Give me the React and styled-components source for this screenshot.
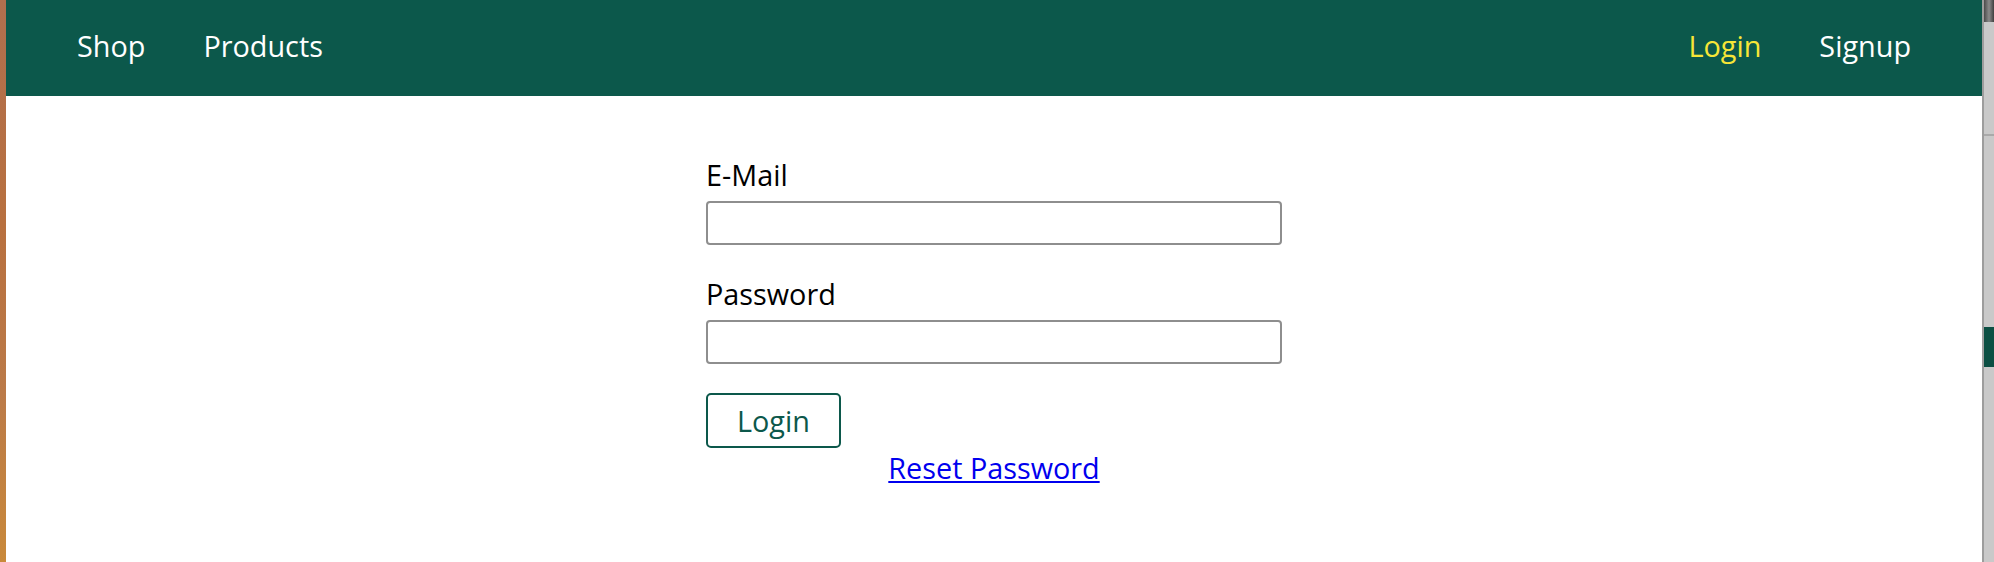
import React from "react";
import styled, { createGlobalStyle } from "styled-components";

const GlobalStyle = createGlobalStyle`
  html, body {
    margin: 0;
    padding: 0;
    height: 100%;
    background: #ffffff;
  }
  body {
    font-family: "Open Sans", "Noto Sans", sans-serif;
  }
  * {
    box-sizing: border-box;
  }
`;

const navLinks = [
  { label: "Shop", href: "/" },
  { label: "Products", href: "/products" }
];

const authLinks = [
  { label: "Login", href: "/login", active: true },
  { label: "Signup", href: "/signup" }
];

const App = () => {
  return (
    <React.Fragment>
      <GlobalStyle />
      <Screen>
        <LeftEdge />
        <Page>
          <Header>
            <NavList>
              {navLinks.map(item => (
                <NavItem key={item.label}>
                  <NavLink href={item.href}>{item.label}</NavLink>
                </NavItem>
              ))}
            </NavList>
            <NavList>
              {authLinks.map(item => (
                <NavItem key={item.label}>
                  <NavLink href={item.href} $active={item.active}>
                    {item.label}
                  </NavLink>
                </NavItem>
              ))}
            </NavList>
          </Header>
          <Main>
            <LoginForm onSubmit={e => e.preventDefault()}>
              <FormControl>
                <Label htmlFor="email">E-Mail</Label>
                <Input type="email" id="email" name="email" />
              </FormControl>
              <FormControl>
                <Label htmlFor="password">Password</Label>
                <Input type="password" id="password" name="password" />
              </FormControl>
              <Button type="submit">Login</Button>
            </LoginForm>
            <Centered>
              <ResetLink href="/reset">Reset Password</ResetLink>
            </Centered>
          </Main>
        </Page>
        <RightEdge>
          <EdgeTop />
          <EdgeLine />
          <EdgeBand />
        </RightEdge>
      </Screen>
    </React.Fragment>
  );
};

export default App;

const Screen = styled.div`
  display: flex;
  height: 100vh;
  overflow: hidden;
`;

const LeftEdge = styled.div`
  width: 6px;
  flex: 0 0 6px;
  background: linear-gradient(180deg, #b06f4e 0%, #b8703f 40%, #bb7a48 70%, #c9893a 100%);
`;

const RightEdge = styled.div`
  position: relative;
  width: 12px;
  flex: 0 0 12px;
  background: #c9c9c9;
  border-left: 2px solid #9d9d9d;
`;

const EdgeTop = styled.div`
  height: 22px;
  background: linear-gradient(90deg, #4a4a4a, #8a8a8a 50%, #3f3f3f);
`;

const EdgeLine = styled.div`
  position: absolute;
  left: 0;
  right: 0;
  top: 134px;
  height: 2px;
  background: #a9a9a9;
`;

const EdgeBand = styled.div`
  position: absolute;
  left: 0;
  right: 0;
  top: 327px;
  height: 40px;
  background: #0b4f43;
`;

const Page = styled.div`
  flex: 1;
  display: flex;
  flex-direction: column;
  background: #ffffff;
`;

const Header = styled.header`
  height: 96px;
  background: #0c584b;
  padding: 0 71px 5px 71px;
  display: flex;
  align-items: center;
  justify-content: space-between;
`;

const NavList = styled.ul`
  list-style: none;
  margin: 0;
  padding: 0;
  display: flex;
  align-items: center;
  gap: 58px;
`;

const NavItem = styled.li`
  margin: 0;
`;

const NavLink = styled.a`
  font-size: 28.8px;
  color: ${props => (props.$active ? "#f7e637" : "#ffffff")};
  text-decoration: none;
`;

const Main = styled.main`
  padding-top: 59px;
`;

const LoginForm = styled.form`
  width: 576px;
  margin: 0 auto;
`;

const FormControl = styled.div`
  margin-bottom: 29px;
`;

const Label = styled.label`
  display: block;
  font-size: 28.8px;
  color: #000000;
  margin-bottom: 7px;
`;

const Input = styled.input`
  display: block;
  width: 100%;
  height: 44px;
  border: 2px solid #8e8e8e;
  border-radius: 4px;
  font: inherit;
  font-size: 25.6px;
  padding: 0 8px;
  outline: none;
`;

const Button = styled.button`
  display: block;
  font: inherit;
  font-size: 28.8px;
  line-height: 39px;
  color: #0c584b;
  background: transparent;
  border: 2px solid #0c584b;
  border-radius: 5px;
  padding: 6px 29px;
  margin-top: 3px;
  cursor: pointer;
`;

const Centered = styled.div`
  text-align: center;
`;

const ResetLink = styled.a`
  font-size: 28.8px;
  color: #0000ee;
  text-decoration: underline;
`;
